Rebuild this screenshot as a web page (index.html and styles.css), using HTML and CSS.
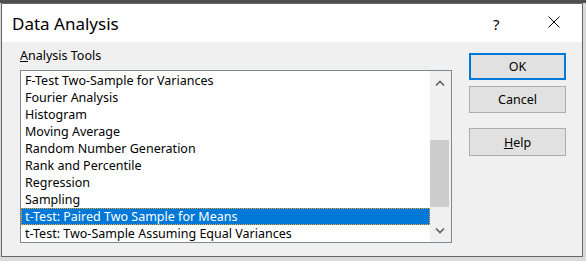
FILE: index.html
```
<!DOCTYPE html>
<html lang="en">
	<head>
		<meta charset="utf-8" />
		<meta name="viewport" content="width=device-width, initial-scale=1.0" />
		<title>Data Analysis</title>
		<link rel="stylesheet" href="styles.css">
	</head>
	<body>
		<div class="desk">
			<div class="dialog">
				<div class="titlebar">
					<span class="title">Data Analysis</span>
					<span class="help-glyph">?</span>
					<svg class="close" width="12" height="12" viewBox="0 0 12 12">
						<path d="M0.5 0.5 L11.5 11.5 M11.5 0.5 L0.5 11.5" stroke="#000" stroke-width="1" fill="none" />
					</svg>
				</div>

				<div class="content">
					<div class="tools">
						<div class="label"><u>A</u>nalysis Tools</div>
						<div class="listbox">
							<ul class="items">
								<li>F-Test Two-Sample for Variances</li>
								<li>Fourier Analysis</li>
								<li>Histogram</li>
								<li>Moving Average</li>
								<li>Random Number Generation</li>
								<li>Rank and Percentile</li>
								<li>Regression</li>
								<li>Sampling</li>
								<li class="selected">t-Test: Paired Two Sample for Means</li>
								<li>t-Test: Two-Sample Assuming Equal Variances</li>
							</ul>
							<div class="scrollbar">
								<div class="arrow">
									<svg width="10" height="7" viewBox="0 0 10 7">
										<path d="M1 5.5 L5 1.5 L9 5.5" stroke="#606060" stroke-width="1.6" fill="none" />
									</svg>
								</div>
								<div class="track">
									<div class="thumb"></div>
								</div>
								<div class="arrow">
									<svg width="10" height="7" viewBox="0 0 10 7">
										<path d="M1 1.5 L5 5.5 L9 1.5" stroke="#606060" stroke-width="1.6" fill="none" />
									</svg>
								</div>
							</div>
						</div>
					</div>

					<div class="buttons">
						<button class="default">OK</button>
						<button>Cancel</button>
						<button class="spaced"><u>H</u>elp</button>
					</div>
				</div>
			</div>
		</div>
	</body>
</html>
```

FILE: styles.css
```
body {
	margin: 0;
	background: #dadada;
	font-family: 'Noto Sans', 'Open Sans', sans-serif;
	font-size: 12.5px;
	color: #000000;
}

.desk {
	height: 261px;
	padding: 3px 0 0 1px;
	box-sizing: border-box;
	background: linear-gradient(#4f4f4f 0, #4f4f4f 3px, #dadada 3px);
}

.dialog {
	width: 582px;
	height: 254px;
	box-sizing: border-box;
	border: 1px solid #666666;
	background: #f0f0f0;
	display: flex;
	flex-direction: column;
}

.titlebar {
	height: 38px;
	background: #ffffff;
	display: flex;
	align-items: center;
	padding-left: 10px;
}

.title {
	flex: 1;
	font-size: 17px;
	line-height: 24px;
	margin-top: 2px;
}

.help-glyph {
	font-size: 15px;
	width: 10px;
	margin-right: 45px;
	margin-top: 1px;
}

.close {
	margin-right: 22px;
	margin-top: -3px;
}

.content {
	display: flex;
	padding: 5px 16px 0 18px;
	gap: 17px;
}

.tools {
	width: 432px;
}

.label {
	line-height: 16px;
	margin-top: 1px;
	margin-bottom: 6px;
}

.listbox {
	height: 173px;
	box-sizing: border-box;
	border: 1px solid #828790;
	background: #ffffff;
	display: flex;
}

.items {
	flex: 1;
	list-style: none;
	margin: 0;
	padding: 1px 0 0;
}

.items li {
	height: 17px;
	line-height: 18px;
	padding-left: 4px;
	white-space: nowrap;
	box-sizing: border-box;
}

.items li.selected {
	background: #0078d7;
	color: #ffffff;
	outline: 1px dotted #f5a623;
	outline-offset: -1px;
}

.scrollbar {
	width: 21px;
	background: #f0f0f0;
	display: flex;
	flex-direction: column;
}

.arrow {
	height: 24px;
	display: flex;
	align-items: center;
	justify-content: center;
	padding-right: 2px;
}

.track {
	flex: 1;
	padding-top: 45px;
}

.thumb {
	height: 67px;
	width: 19px;
	background: #cdcdcd;
}

.buttons {
	display: flex;
	flex-direction: column;
	gap: 6px;
	padding-top: 6px;
}

button {
	width: 97px;
	height: 27px;
	box-sizing: border-box;
	border: 1px solid #adadad;
	background: #e1e1e1;
	font-family: inherit;
	font-size: 12.5px;
	color: #000000;
	padding: 0;
}

button.default {
	border: 2px solid #0078d7;
}

button.spaced {
	margin-top: 9px;
	height: 28px;
}
```
